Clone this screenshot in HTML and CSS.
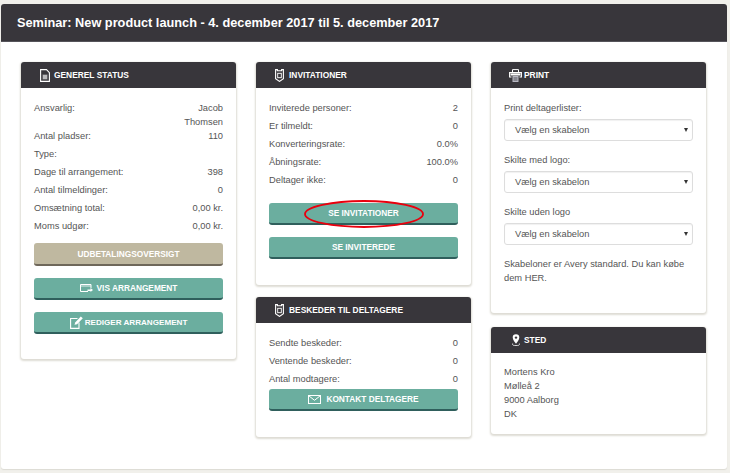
FILE: index.html
```html
<!DOCTYPE html>
<html lang="da">
<head>
<meta charset="utf-8">
<title>Seminar</title>
<link rel="stylesheet" href="styles.css">
</head>
<body>
<div class="page">
  <header class="page-head">Seminar: New product launch - 4. december 2017 til 5. december 2017</header>
  <main class="columns">
    <div class="col">
      <section class="card card-status">
        <h2 class="card-head">
          <svg class="head-icon" viewBox="0 0 10 13"><path d="M.6.6h5.900l2.900 3v8.800H.6z" fill="none" stroke="#fff" stroke-width="1.100"/><path d="M2.500 5.500h5v5h-5z" fill="#8d8c90"/><path d="M3 7h4M3 9h4" stroke="#fff" stroke-width=".8"/></svg>
          <span>Generel status</span>
        </h2>
        <div class="card-body">
          <div class="row"><span>Ansvarlig:</span><span class="val val-wrap">Jacob Thomsen</span></div>
          <div class="row row-tight"><span>Antal pladser:</span><span>110</span></div>
          <div class="row"><span>Type:</span><span></span></div>
          <div class="row"><span>Dage til arrangement:</span><span>398</span></div>
          <div class="row"><span>Antal tilmeldinger:</span><span>0</span></div>
          <div class="row"><span>Omsætning total:</span><span>0,00 kr.</span></div>
          <div class="row"><span>Moms udgør:</span><span>0,00 kr.</span></div>
          <a class="btn btn-tan">Udbetalingsoversigt</a>
          <a class="btn btn-gap">
            <svg class="btn-icon" viewBox="0 0 13 8"><path d="M8 7.500H.5V.5h10.500v3.500" fill="none" stroke="#fff"/><path d="M.5 2h10.500" stroke="#fff" stroke-width=".8"/><path d="M7.500 5.500h3V4l2.500 2-2.500 2V7h-3z" fill="#fff"/></svg>
            <span>Vis arrangement</span>
          </a>
          <a class="btn btn-gap btn-edit">
            <svg class="btn-icon btn-icon-edit" viewBox="0 0 13 13"><path d="M7.500 2.500H.6v9.900h8.400V6.500" fill="none" stroke="#fff" stroke-width="1.100"/><path d="M4.500 8.800l.7-2.300L10.800.4l2 1.800-5.700 6z" fill="#fff"/></svg>
            <span>Rediger arrangement</span>
          </a>
        </div>
      </section>
    </div>
    <div class="col">
      <section class="card card-invite">
        <h2 class="card-head">
          <svg class="head-icon head-icon-badge" viewBox="0 0 9 13"><path d="M.6.6h1.800v1.200h4.200V.6h1.800v9.200L4.500 12.400.6 9.800z" fill="none" stroke="#fff" stroke-width="1.100"/><rect x="2.700" y="4.300" width="3.600" height="4.400" fill="none" stroke="#fff" stroke-width=".9"/></svg>
          <span>Invitationer</span>
        </h2>
        <div class="card-body">
          <div class="row"><span>Inviterede personer:</span><span>2</span></div>
          <div class="row"><span>Er tilmeldt:</span><span>0</span></div>
          <div class="row"><span>Konverteringsrate:</span><span>0.0%</span></div>
          <div class="row"><span>Åbningsrate:</span><span>100.0%</span></div>
          <div class="row"><span>Deltager ikke:</span><span>0</span></div>
          <a class="btn btn-marked">
            <span>Se invitationer</span>
            <svg class="mark" viewBox="0 0 120 28"><ellipse cx="60" cy="14" rx="59" ry="13" fill="none" stroke="#e8000d" stroke-width="1.800"/></svg>
          </a>
          <a class="btn btn-gap">Se inviterede</a>
        </div>
      </section>
      <section class="card card-messages">
        <h2 class="card-head">
          <svg class="head-icon head-icon-badge" viewBox="0 0 9 13"><path d="M.6.6h1.800v1.200h4.200V.6h1.800v9.200L4.500 12.400.6 9.800z" fill="none" stroke="#fff" stroke-width="1.100"/><rect x="2.700" y="4.300" width="3.600" height="4.400" fill="none" stroke="#fff" stroke-width=".9"/></svg>
          <span>Beskeder til deltagere</span>
        </h2>
        <div class="card-body">
          <div class="row"><span>Sendte beskeder:</span><span>0</span></div>
          <div class="row"><span>Ventende beskeder:</span><span>0</span></div>
          <div class="row"><span>Antal modtagere:</span><span>0</span></div>
          <a class="btn btn-contact">
            <svg class="btn-icon btn-icon-mail" viewBox="0 0 13 9"><rect x=".5" y=".5" width="12" height="8" fill="none" stroke="#fff"/><path d="M.8.8l5.700 4.500L12.200.8" fill="none" stroke="#fff"/></svg>
            <span>Kontakt deltagere</span>
          </a>
        </div>
      </section>
    </div>
    <div class="col col-right">
      <section class="card card-print">
        <h2 class="card-head card-head-print">
          <svg class="head-icon head-icon-print" viewBox="0 0 13 13"><path d="M3.500.6h6v3h-6z" fill="none" stroke="#fff"/><path d="M2.500 8H.6V3.600h11.800V8h-1.900" fill="none" stroke="#fff" stroke-width="1.100"/><path d="M1.500 4.500h10v2h-10z" fill="#fff"/><rect x="3.500" y="7" width="6" height="6" fill="#b9b9c4"/><path d="M4.500 9h4M4.500 11h4" stroke="#55545a"/></svg>
          <span>Print</span>
        </h2>
        <div class="card-body">
          <label class="field-label">Print deltagerlister:</label>
          <div class="select"><span>Vælg en skabelon</span><span class="caret"></span></div>
          <label class="field-label">Skilte med logo:</label>
          <div class="select"><span>Vælg en skabelon</span><span class="caret"></span></div>
          <label class="field-label">Skilte uden logo</label>
          <div class="select"><span>Vælg en skabelon</span><span class="caret"></span></div>
          <p class="note">Skabeloner er Avery standard. Du kan købe dem HER.</p>
        </div>
      </section>
      <section class="card card-place">
        <h2 class="card-head card-head-place">
          <svg class="head-icon head-icon-pin" viewBox="0 0 8 12"><path d="M4 .3a3.300 3.300 0 0 1 3.300 3.300C7.300 6 5 8.200 4 9.800 3 8.200.7 6 .7 3.600A3.300 3.300 0 0 1 4 .3z" fill="#fff"/><circle cx="4" cy="3.600" r="1.200" fill="#38363b"/><path d="M.6 9.500c-.6 1.800 1 2 3.400 2s4-.2 3.400-2" fill="none" stroke="#fff" stroke-width=".8"/></svg>
          <span>Sted</span>
        </h2>
        <div class="card-body address">Mortens Kro<br>Mølleå 2<br>9000 Aalborg<br>DK</div>
      </section>
    </div>
  </main>
</div>
</body>
</html>
```
FILE: styles.css
```css
* { box-sizing: border-box; }
html, body { margin: 0; height: 100%; }
body {
  background: #f1f0eb;
  font-family: "Liberation Sans", Arial, sans-serif;
  font-size: 9.300px;
  color: #555;
  overflow: hidden;
}
.page {
  width: 726px;
  height: 465px;
  margin: 4px 0 0 1px;
  background: #fff;
  border-radius: 3px;
  box-shadow: 0 1px 1px #dcdbd4;
}
.page-head {
  height: 38px;
  padding: 0 16px;
  line-height: 38px;
  background: #38363b;
  border-bottom: 1px solid #55545a;
  border-radius: 3px 3px 0 0;
  color: #fff;
  font-size: 12.750px;
  font-weight: 700;
}
.columns {
  display: grid;
  grid-template-columns: repeat(3, 215px);
  column-gap: 20px;
  padding: 20px 0 0 20px;
}
.col { display: flex; flex-direction: column; gap: 12px; }
.col-right { gap: 14px; }
.card {
  background: #fff;
  border-radius: 3px;
  box-shadow: 0 1px 2px 1px #dedcd4;
}
.card-status { height: 297px; }
.card-invite { height: 223px; }
.card-messages { height: 140px; }
.card-print { height: 251px; }
.card-place { height: 107px; }
.card-head {
  display: flex;
  align-items: center;
  height: 26px;
  margin: 0;
  padding-left: 19px;
  background: #38363b;
  border-radius: 3px 3px 0 0;
  color: #fff;
  font-size: 8.400px;
  font-weight: 700;
  text-transform: uppercase;
}
.card-head-print { padding-left: 18px; }
.card-head-place { padding-left: 21px; }
.head-icon { width: 10px; height: 13px; margin-right: 4px; flex: none; }
.head-icon-badge { width: 9px; margin-right: 5px; }
.head-icon-print { width: 13px; margin-right: 2px; }
.head-icon-pin { width: 8px; height: 12px; margin-right: 4px; }
.card-body { padding: 11px 13px 0; }
.row {
  display: flex;
  justify-content: space-between;
  min-height: 18px;
  line-height: 18px;
}
.row-tight { margin-top: -2px; }
.val-wrap { width: 52px; line-height: 14px; padding-top: 2px; text-align: right; }
.btn {
  display: flex;
  align-items: center;
  justify-content: center;
  gap: 4px;
  position: relative;
  height: 22px;
  background: #6bae9f;
  border-bottom: 2px solid #2f5f5c;
  border-radius: 3px;
  color: #fff;
  font-size: 8.300px;
  font-weight: 700;
  text-transform: uppercase;
}
.btn-tan { height: 23px; margin-top: 8px; background: #bfb8a0; border-bottom-color: #6e675a; }
.btn-marked { margin-top: 14px; }
.btn-contact { margin-top: 1px; gap: 5px; }
.btn-gap { margin-top: 12px; }
.btn-edit { gap: 2px; font-size: 8.100px; }
.btn-icon { width: 13px; height: 8px; flex: none; }
.btn-icon-edit { height: 13px; }
.btn-icon-mail { height: 9px; }
.mark { position: absolute; left: 35px; top: -3px; width: 120px; height: 28px; }
.field-label { display: block; line-height: 18px; margin-bottom: 2px; }
.select {
  display: flex;
  align-items: center;
  justify-content: space-between;
  height: 22px;
  margin-bottom: 10px;
  padding: 0 4px 0 10px;
  border: 1px solid #ddd;
  border-radius: 3px;
  box-shadow: inset 0 1px 1px rgba(0,0,0,.06);
}
.caret {
  width: 0;
  height: 0;
  border-left: 2.500px solid transparent;
  border-right: 2.500px solid transparent;
  border-top: 4px solid #333;
}
.note { margin: 12px 0 0; line-height: 14px; }
.address { line-height: 14px; padding-top: 12px; }
```
